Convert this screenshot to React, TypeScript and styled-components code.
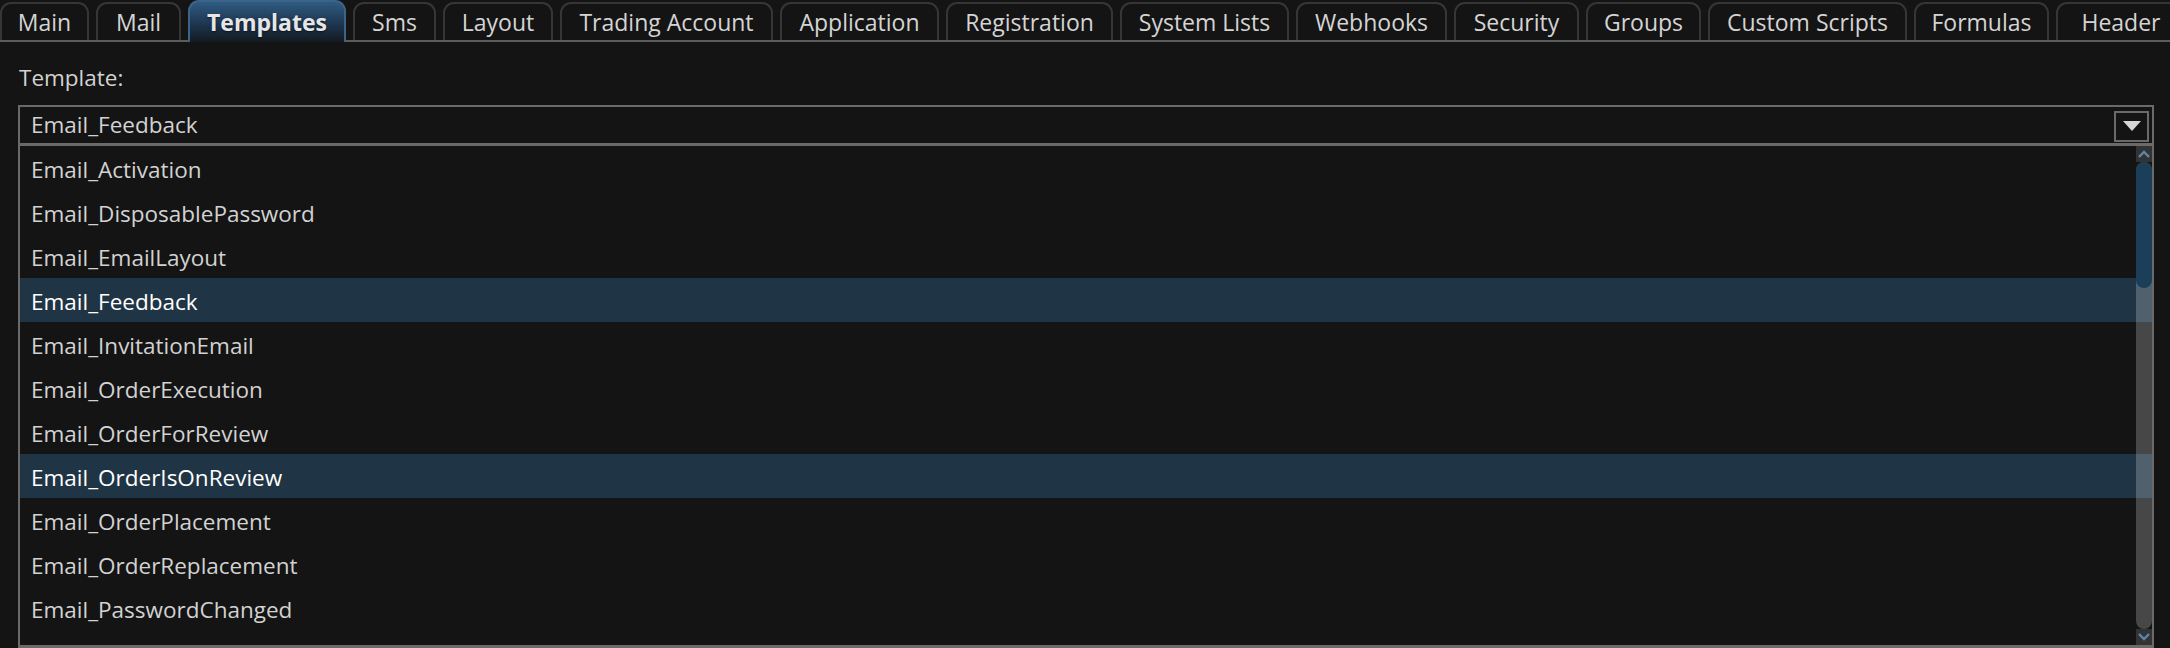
import React from 'react'
import styled, { createGlobalStyle } from 'styled-components'

const GlobalStyle = createGlobalStyle`
  html, body {
    margin: 0;
    padding: 0;
    background: #141414;
  }
  body {
    font-family: 'Open Sans', 'Noto Sans', sans-serif;
    color: #d2d2d2;
  }
`

const Page = styled.div`
  width: 2170px;
  height: 648px;
  overflow: hidden;
  background: #141414;
`

const TabBar = styled.div`
  display: flex;
  gap: 7px;
  height: 38px;
  padding-top: 2px;
  border-bottom: 2px solid #5c5c5c;
  white-space: nowrap;
  position: relative;
`

const Tab = styled.div<{ $width: number; $active?: boolean }>`
  flex: 0 0 auto;
  width: ${p => p.$width}px;
  box-sizing: border-box;
  display: flex;
  align-items: center;
  justify-content: center;
  font-size: 23px;
  border: 2px solid #363636;
  border-bottom: none;
  border-radius: 11px 11px 0 0;
  color: #d4d4d4;
  background: #141414;
  ${p =>
    p.$active &&
    `
    margin-top: -2px;
    margin-bottom: -2px;
    border-color: #3d6488;
    background: linear-gradient(180deg, #2f5b82 0%, #1d3550 55%, #141a20 100%);
    color: #e6e6e6;
    font-weight: 700;
    text-shadow: 0 1px 2px rgba(0,0,0,0.6);
    position: relative;
    z-index: 1;
  `}
`

const Content = styled.div`
  padding: 0 16px 0 18px;
`

const Label = styled.div`
  font-size: 22.5px;
  line-height: 30px;
  margin-top: 21px;
  padding-left: 1px;
  color: #d2d2d2;
`

const Combo = styled.div`
  margin-top: 12px;
  height: 38px;
  box-sizing: border-box;
  border: 2px solid #6a6a6a;
  border-bottom: none;
  display: flex;
  align-items: center;
  justify-content: space-between;
  padding: 0 3px 0 11px;
  font-size: 22.5px;
`

const ComboValue = styled.span`
  padding-bottom: 2px;
`

const ArrowButton = styled.div`
  width: 35px;
  height: 31px;
  box-sizing: border-box;
  border: 2px solid #6a6a6a;
  display: flex;
  align-items: center;
  justify-content: center;
  margin-top: 2px;
`

const List = styled.div`
  position: relative;
  height: 505px;
  box-sizing: border-box;
  border: 2px solid #6a6a6a;
  border-top-width: 3px;
  border-bottom-width: 3px;
  overflow: hidden;
`

const Row = styled.div<{ $highlight?: boolean }>`
  height: 44px;
  box-sizing: border-box;
  display: flex;
  align-items: center;
  padding: 2px 0 0 11px;
  font-size: 22.5px;
  color: ${p => (p.$highlight ? '#ffffff' : '#d2d2d2')};
  background: ${p => (p.$highlight ? '#1f3444' : 'transparent')};
`

const ScrollBar = styled.div`
  position: absolute;
  top: 0;
  right: 0;
  bottom: 0;
  width: 16px;
  display: flex;
  flex-direction: column;
`

const ScrollArrow = styled.div`
  height: 16px;
  flex: 0 0 auto;
  background: #333;
  display: flex;
  align-items: center;
  justify-content: center;
`

const Track = styled.div`
  flex: 1;
  position: relative;
  border-radius: 8px;
  background: rgba(255, 255, 255, 0.22);
`

const Thumb = styled.div`
  position: absolute;
  left: 0;
  right: 0;
  top: 0;
  border-radius: 8px;
  background: #1b3e59;
`

const tabs = [
  { name: 'Main', width: 89 },
  { name: 'Mail', width: 85 },
  { name: 'Templates', width: 158, active: true },
  { name: 'Sms', width: 83 },
  { name: 'Layout', width: 110 },
  { name: 'Trading Account', width: 213 },
  { name: 'Application', width: 159 },
  { name: 'Registration', width: 167 },
  { name: 'System Lists', width: 169 },
  { name: 'Webhooks', width: 151 },
  { name: 'Security', width: 125 },
  { name: 'Groups', width: 115 },
  { name: 'Custom Scripts', width: 199 },
  { name: 'Formulas', width: 135 },
  { name: 'Header', width: 130 },
]

const templates = [
  'Email_Activation',
  'Email_DisposablePassword',
  'Email_EmailLayout',
  'Email_Feedback',
  'Email_InvitationEmail',
  'Email_OrderExecution',
  'Email_OrderForReview',
  'Email_OrderIsOnReview',
  'Email_OrderPlacement',
  'Email_OrderReplacement',
  'Email_PasswordChanged',
  'Email_PinCodeChanged',
]

const highlighted = ['Email_Feedback', 'Email_OrderIsOnReview']

const Chevron = ({ up }: { up?: boolean }) => (
  <svg width="12" height="8" viewBox="0 0 12 8">
    <path
      d={up ? 'M1 7 L6 2 L11 7' : 'M1 1 L6 6 L11 1'}
      fill="none"
      stroke="#5f86a8"
      strokeWidth="2.4"
    />
  </svg>
)

export default function App() {
  return (
    <Page>
      <GlobalStyle />
      <TabBar>
        {tabs.map(t => (
          <Tab key={t.name} $width={t.width} $active={t.active}>
            {t.name}
          </Tab>
        ))}
      </TabBar>
      <Content>
        <Label>Template:</Label>
        <Combo>
          <ComboValue>Email_Feedback</ComboValue>
          <ArrowButton>
            <svg width="18" height="10" viewBox="0 0 18 10">
              <path d="M0 0 H18 L9 10 Z" fill="#d8d8d8" />
            </svg>
          </ArrowButton>
        </Combo>
        <List>
          {templates.map(name => (
            <Row key={name} $highlight={highlighted.includes(name)}>
              {name}
            </Row>
          ))}
          <ScrollBar>
            <ScrollArrow>
              <Chevron up />
            </ScrollArrow>
            <Track>
              <Thumb style={{ height: 126 }} />
            </Track>
            <ScrollArrow>
              <Chevron />
            </ScrollArrow>
          </ScrollBar>
        </List>
      </Content>
    </Page>
  )
}
